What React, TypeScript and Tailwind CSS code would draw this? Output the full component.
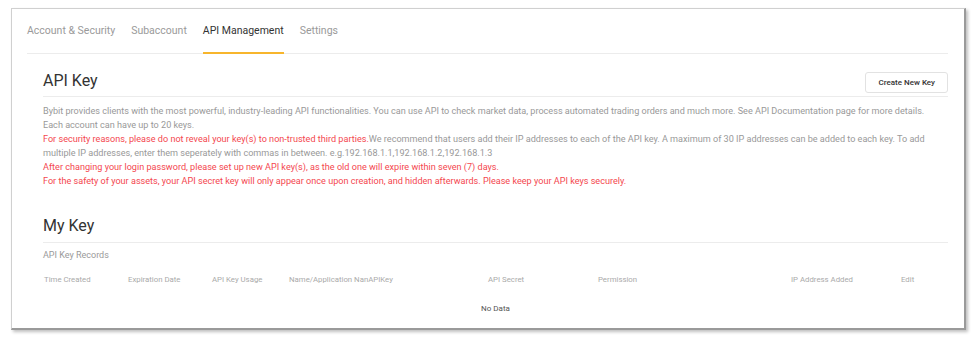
import React from "react";

const tabs = ["Account & Security", "Subaccount", "API Management", "Settings"];
const cols = [
  "Time Created",
  "Expiration Date",
  "API Key Usage",
  "Name/Application NanAPIKey",
  "API Secret",
  "Permission",
  "IP Address Added",
  "Edit",
];

export default function App() {
  return (
    <div
      className="w-[978px] h-[346px] bg-white pt-[8px] pl-[11px]"
      style={{ fontFamily: 'Roboto, "Liberation Sans", sans-serif' }}
    >
      <div className="w-[955px] h-[322px] bg-white border-l border-t border-[#d0d0d0] border-r-2 border-b-2 border-r-[#9a9a9a] border-b-[#9a9a9a] shadow-[2px_2px_3px_rgba(0,0,0,0.25)] flex flex-col">
        {/* Tabs */}
        <div className="ml-[15px] mr-[16px] h-[45px] border-b border-[#ececec] flex items-stretch gap-[16px]">
          {tabs.map((t) => {
            const active = t === "API Management";
            return (
              <div
                key={t}
                className={
                  "flex items-center pt-[1px] text-[10.5px] border-b-2 -mb-px " +
                  (active
                    ? "text-[#333] border-[#f7b52c]"
                    : "text-[#9a9a9a] border-transparent")
                }
              >
                {t}
              </div>
            );
          })}
        </div>

        <div className="ml-[31px] mr-[16px] flex flex-col">
          {/* API Key header */}
          <div className="h-[43px] flex items-start justify-between border-b border-[#ececec]">
            <div className="text-[16px] leading-[24px] text-[#333] mt-[15px]">API Key</div>
            <button className="h-[21px] px-[12px] border border-[#e2e2e2] rounded-[3px] text-[8px] font-medium text-[#333] bg-white mt-[18px]">
              Create New Key
            </button>
          </div>

          <div className="pt-[7px] text-[9.1px] leading-[14px] text-[#999]">
            <p>
              Bybit provides clients with the most powerful, industry-leading API functionalities. You can use API to check market data, process automated trading orders and much more. See API Documentation page for more details.
            </p>
            <p>Each account can have up to 20 keys.</p>
            <p>
              <span className="text-[#f4474f]">
                For security reasons, please do not reveal your key(s) to non-trusted third parties.
              </span>
              We recommend that users add their IP addresses to each of the API key. A maximum of 30 IP addresses can be added to each key. To add multiple IP addresses, enter them seperately with commas in between. e.g.192.168.1.1,192.168.1.2,192.168.1.3
            </p>
            <p className="text-[#f4474f]">
              After changing your login password, please set up new API key(s), as the old one will expire within seven (7) days.
            </p>
            <p className="text-[#f4474f]">
              For the safety of your assets, your API secret key will only appear once upon creation, and hidden afterwards. Please keep your API keys securely.
            </p>
          </div>

          {/* My Key */}
          <div className="mt-[26px] h-[29px] flex items-start border-b border-[#ececec]">
            <div className="text-[16px] leading-[24px] text-[#333]">My Key</div>
          </div>
          <div className="mt-[6px] text-[9px] text-[#9a9a9a] leading-[12px]">API Key Records</div>

          <div className="mt-[13px] grid grid-cols-[84px_84px_77px_199px_110px_193px_110px_1fr] pl-[1px] text-[7.8px] text-[#aaa] leading-[11px]">
            {cols.map((c) => (
              <div key={c}>{c}</div>
            ))}
          </div>
          <div className="mt-[18px] text-center text-[8px] text-[#555] leading-[11px]">No Data</div>
        </div>
      </div>
    </div>
  );
}
